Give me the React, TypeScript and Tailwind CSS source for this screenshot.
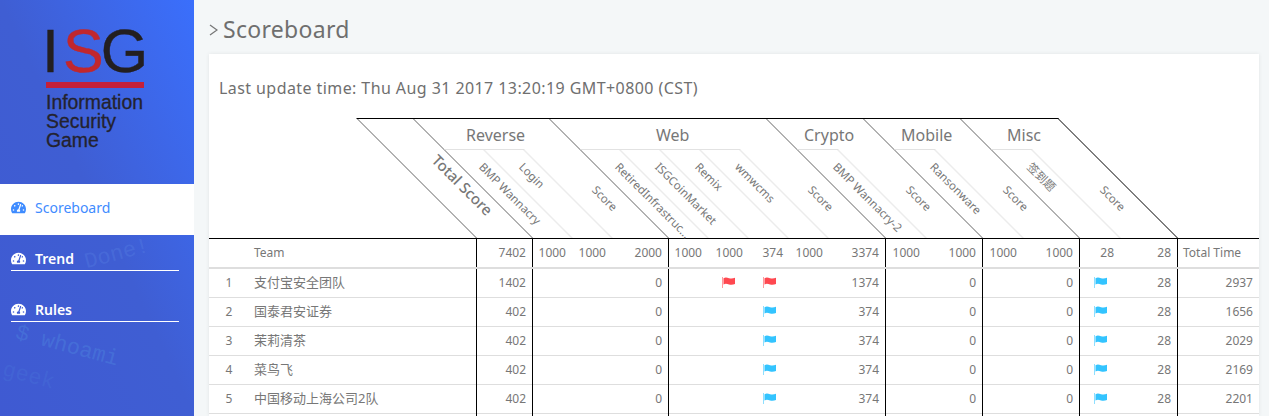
import React from 'react';
import { FaTachometerAlt } from 'react-icons/fa';

const SANS = "font-['Noto_Sans','Noto_Sans_CJK_SC',sans-serif]";

// Column layout shared by the header row and every body row
const ROW = 'grid grid-cols-[45px_222px_56px_40px_40px_56px_40px_41px_40px_40px_56px_41px_56px_41px_56px_41px_57px_82px]';

// Which column starts a category (gets the black rule on its left)
const RULED = new Set([2, 3, 6, 11, 13, 15, 17]);

type Cell = string | { flag: 'red' | 'blue' };

const red: Cell = { flag: 'red' };
const blue: Cell = { flag: 'blue' };

const teams = [
  { rank: '1', name: '支付宝安全团队', total: '1402', first: true, web: '1374', time: '2937' },
  { rank: '2', name: '国泰君安证券', total: '402', web: '374', time: '1656' },
  { rank: '3', name: '茉莉清茶', total: '402', web: '374', time: '2029' },
  { rank: '4', name: '菜鸟飞', total: '402', web: '374', time: '2169' },
  { rank: '5', name: '中国移动上海公司2队', total: '402', web: '374', time: '2201' },
];

function Flag({ color }: { color: 'red' | 'blue' }) {
  const fill = color === 'red' ? '#ff4850' : '#33c4ff';
  return (
    <svg width="13" height="11" viewBox="0 0 13 11" className="block">
      <rect x="0" y="0" width="1" height="11" fill={fill} opacity="0.55" />
      <path d="M1.5 1.2C3.5 0.2 5 0.6 7 1.2C9 1.8 11 1.6 13 0.8V7C11 7.8 9 8 7 7.4C5 6.8 3.5 6.4 1.5 7.4Z" fill={fill} />
    </svg>
  );
}

function SubLabel({ text, offset = 'ml-[calc(50%+2px)] mt-[15px]', clip = false }: { text: string; offset?: string; clip?: boolean }) {
  // the header row is skewed, so undo the skew and then turn the label along the diagonal
  return (
    <div className={`flex h-0 w-0 items-center -skew-x-[45deg] origin-left ${offset}`}>
      <span className={`shrink-0 origin-left rotate-45 whitespace-nowrap text-[11.5px] leading-4 text-[#777] ${clip ? 'block w-[101px] truncate' : ''}`}>
        {text}
      </span>
    </div>
  );
}

function SubCell({ text, width, clip }: { text: string; width: string; clip?: boolean }) {
  return (
    <div className={`${width} h-full border-r-2 border-[#ececec]`}>
      <SubLabel text={text} clip={clip} />
    </div>
  );
}

function Group({ name, width, score, children }: { name: string; width: string; score: string; children: React.ReactNode }) {
  return (
    <div className={`${width} flex h-full flex-col border-l border-[#666]`}>
      <div className="flex h-[30px] shrink-0 items-center justify-center pr-[3px] pt-[2px]">
        <span className="-skew-x-[45deg] text-[16px] text-[#777]">{name}</span>
      </div>
      <div className="flex min-h-0 flex-1">
        <div className="flex h-full border-t border-[#e2e2e2]">{children}</div>
        <div className={`${score} h-full`}>
          <SubLabel text="Score" offset="ml-[calc(50%+3px)] mt-[39px]" />
        </div>
      </div>
    </div>
  );
}

function DiagonalHeader() {
  return (
    <div className="flex h-[120px] origin-bottom-left skew-x-[45deg] pl-[267px]">
      <div className="flex h-full border-t border-r border-black">
        <div className="h-full w-[56px] border-l border-[#666]">
          <div className="ml-[calc(50%+11px)] mt-[38px] flex h-0 w-0 origin-left -skew-x-[45deg] items-center">
            <span className="shrink-0 origin-left rotate-45 whitespace-nowrap text-[15px] font-medium leading-5 text-[#777]">
              Total Score
            </span>
          </div>
        </div>
        <Group name="Reverse" width="w-[136px]" score="w-[55px]">
          <SubCell text="BMP Wannacry" width="w-[40px]" />
          <SubCell text="Login" width="w-[40px]" />
        </Group>
        <Group name="Web" width="w-[217px]" score="w-[56px]">
          <SubCell text="RetiredInfrastructure" width="w-[40px]" clip />
          <SubCell text="ISGCoinMarket" width="w-[40px]" />
          <SubCell text="Remix" width="w-[40px]" />
          <SubCell text="wmwcms" width="w-[40px]" />
        </Group>
        <Group name="Crypto" width="w-[97px]" score="w-[55px]">
          <SubCell text="BMP Wannacry-2" width="w-[41px]" />
        </Group>
        <Group name="Mobile" width="w-[97px]" score="w-[55px]">
          <SubCell text="Ransonware" width="w-[41px]" />
        </Group>
        <Group name="Misc" width="w-[98px]" score="w-[56px]">
          <SubCell text="签到题" width="w-[41px]" />
        </Group>
      </div>
    </div>
  );
}

function Row({ cells, head }: { cells: Cell[]; head?: boolean }) {
  return (
    <div className={`${ROW} ${head ? 'h-[30px] border-b-2 border-[#dedede]' : 'h-[29px]'} text-[12px] text-[#777]`}>
      {cells.map((cell, i) => (
        <div
          key={i}
          className={`flex items-center ${i === 0 ? 'justify-center pr-[5px]' : i === 1 ? 'justify-start' : cell === 'Total Time' ? 'justify-start pl-[5px]' : 'justify-end pr-[6px]'} ${i === 1 && !head ? 'text-[13px]' : ''} ${RULED.has(i) ? 'border-l border-black' : ''} ${head ? '' : 'pb-[2px] shadow-[inset_0_-1px_0_#dedede]'}`}
        >
          {typeof cell === 'string' ? (
            cell
          ) : (
            <div className="flex w-full justify-center pl-[6px]">
              <Flag color={cell.flag} />
            </div>
          )}
        </div>
      ))}
    </div>
  );
}

export default function App() {
  return (
    <div className={`flex h-[416px] w-[1269px] overflow-hidden bg-[#f4f7f8] ${SANS}`}>
      {/* Sidebar */}
      <aside className="relative h-full w-[194px] shrink-0 overflow-hidden bg-gradient-to-bl from-[#3a6ffc] via-[#3f5ed3] to-[#3f5ad2]">
        <div className="px-[46px] pt-[21px] font-['Liberation_Sans',sans-serif] text-[#23222e]">
          <div className="flex text-[61px] leading-[60px] text-[#231f20] [-webkit-text-stroke:0.4px]">
            <span className="-ml-[4px] mr-[4px]">I</span>
            <span className="text-[#c1272d]">S</span>
            <span className="-ml-[3px]">G</span>
          </div>
          <div className="mt-[1px] h-[6px] w-[98px] bg-[#c4203a]" />
          <div className="mt-[5px] text-[19.4px] leading-[19px] [-webkit-text-stroke:0.3px]">
            <div>Information</div>
            <div>Security</div>
            <div>Game</div>
          </div>
        </div>

        <nav className="absolute inset-x-0 top-[184px]">
          <div className="flex h-[51px] items-center bg-white pb-[4px] pl-[11px] text-[14px] text-[#3f8cff]">
            <FaTachometerAlt className="mr-[9px] h-[15px] w-[15px]" />
            Scoreboard
          </div>
          <div className="flex h-[51px] flex-col pl-[11px] pr-[15px] pt-[13px] text-[14px] font-semibold text-white">
            <div className="flex h-[23px] items-center border-b border-white pb-[2px]">
              <FaTachometerAlt className="mr-[9px] h-[15px] w-[15px]" />
              Trend
            </div>
          </div>
          <div className="flex h-[51px] flex-col pl-[11px] pr-[15px] pt-[13px] text-[14px] font-semibold text-white">
            <div className="flex h-[23px] items-center border-b border-white pb-[2px]">
              <FaTachometerAlt className="mr-[9px] h-[15px] w-[15px]" />
              Rules
            </div>
          </div>
        </nav>

        {/* faint terminal text in the sidebar background */}
        <span className="absolute left-[84px] top-[238px] -rotate-[15deg] font-['Liberation_Mono',monospace] text-[22px] text-[#5c87e6]/30">Done!</span>
        <span className="absolute left-[14px] top-[330px] rotate-[15deg] font-['Liberation_Mono',monospace] text-[22px] text-[#4f8ae0]/40">$ whoami</span>
        <span className="absolute left-[2px] top-[360px] rotate-[15deg] font-['Liberation_Mono',monospace] text-[22px] text-[#4f8ae0]/20">geek</span>
      </aside>

      {/* Main */}
      <main className="min-w-0 flex-1 pl-[15px] pr-[10px]">
        <h1 className="flex h-[54px] items-center pt-[5px] text-[23px] tracking-[0.3px] text-[#6f6f6f]">
          <span className="mr-[5px] text-[#777]">
            <svg width="9" height="12" viewBox="0 0 9 12" fill="none" stroke="currentColor" strokeWidth="1.3"><path d="M1 1l7 5-7 5" /></svg>
          </span>
          Scoreboard
        </h1>

        <div className="h-[362px] overflow-hidden bg-white shadow-[0_0_4px_rgba(0,0,0,0.08)]">
          <p className="px-[10px] pt-[23px] text-[16px] leading-[22px] tracking-[0.42px] text-[#6f6f6f]">
            Last update time: Thu Aug 31 2017 13:20:19 GMT+0800 (CST)
          </p>
          <div className="mt-[19px]">
            <DiagonalHeader />
          </div>
          <div className="border-t border-black">
            <Row head cells={['', 'Team', '7402', '1000', '1000', '2000', '1000', '1000', '374', '1000', '3374', '1000', '1000', '1000', '1000', '28', '28', 'Total Time']} />
            {teams.map((t) => (
              <Row
                key={t.rank}
                cells={[t.rank, t.name, t.total, '', '', '0', '', t.first ? red : '', t.first ? red : blue, '', t.web, '', '0', '', '0', blue, '28', t.time]}
              />
            ))}
            <Row cells={Array(18).fill('')} />
          </div>
        </div>
      </main>
    </div>
  );
}
